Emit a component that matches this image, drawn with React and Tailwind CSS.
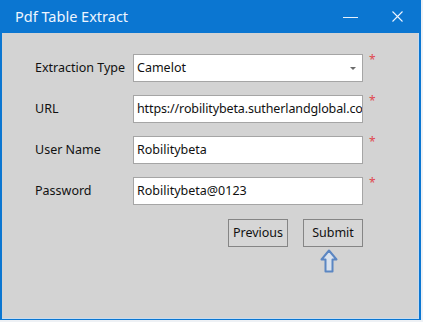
import React from "react";

const font = { fontFamily: '"Noto Sans", "Open Sans", sans-serif' };

function Star() {
  return (
    <span className="self-start ml-[6px] mt-0 text-[12px] leading-none text-[#e0474f]">*</span>
  );
}

function Field({ children, combo, tight }) {
  return (
    <div className="relative h-[28px] w-[230px] bg-white border border-[#a5a5a5] flex items-center pl-[3px] pr-0 overflow-hidden">
      <span className={"whitespace-nowrap text-[12.5px] text-[#111] pt-[1px] " + (tight ? "tracking-[-0.12px]" : "")}>{children}</span>
      {combo && (
        <span className="absolute right-[6px] top-[12px] w-0 h-0 border-l-[3px] border-r-[3px] border-t-[3px] border-l-transparent border-r-transparent border-t-[#6b6b6b]" />
      )}
    </div>
  );
}

function Row({ label, children }) {
  return (
    <div className="flex items-center h-[28px]">
      <div className="w-[98px] text-[12.5px] text-[#111] pt-[1px]">{label}</div>
      {children}
      <Star />
    </div>
  );
}

export default function App() {
  return (
    <div className="w-[423px] h-[322px] bg-[#eef1f5]" style={font}>
      <div className="w-[421px] h-[320px] bg-[#0b76d1] flex flex-col">
        <div className="h-[33px] flex items-center pl-[15px] text-[#eef5ff]">
          <span className="text-[14.5px]">Pdf Table Extract</span>
          <div className="flex-1" />
          <div className="w-[15px] h-[1px] bg-[#e8f1fb] mr-[34px] mt-[2px]" />
          <svg width="11" height="11" viewBox="0 0 11 11" className="mr-[18px]">
            <path d="M0.5 0.5 L10.5 10.5 M10.5 0.5 L0.5 10.5" stroke="#eef5ff" strokeWidth="1.1" fill="none" />
          </svg>
        </div>
        <div className="flex-1 mx-[2px] mb-[1px] bg-[#d3d3d3] border-b border-r border-[#c7dcf0] pt-[21px] pl-[33px]">
          <div className="flex flex-col gap-[13px]">
            <Row label="Extraction Type">
              <Field combo>Camelot</Field>
            </Row>
            <Row label="URL">
              <Field tight>https://robilitybeta.sutherlandglobal.co</Field>
            </Row>
            <Row label="User Name">
              <Field>Robilitybeta</Field>
            </Row>
            <Row label="Password">
              <Field>Robilitybeta@0123</Field>
            </Row>
          </div>
          <div className="flex w-[328px] justify-end gap-[15px] mt-[14px]">
            <button className="w-[60px] h-[28px] border border-[#858585] bg-[#d6d6d6] text-[12.5px] text-[#111] flex items-center justify-center">
              Previous
            </button>
            <div className="flex flex-col items-center">
              <button className="w-[60px] h-[28px] border border-[#858585] bg-[#d6d6d6] text-[12.5px] text-[#111] flex items-center justify-center">
                Submit
              </button>
              <svg width="18" height="24" viewBox="0 0 18 24" className="mt-[2px] mr-[8px]">
                <path d="M9 1.5 L16.5 10.5 L12.5 10.5 L12.5 22.5 L5.5 22.5 L5.5 10.5 L1.5 10.5 Z" fill="#d9e2ee" stroke="#5b86c2" strokeWidth="2" strokeLinejoin="round" />
              </svg>
            </div>
          </div>
        </div>
      </div>
    </div>
  );
}
